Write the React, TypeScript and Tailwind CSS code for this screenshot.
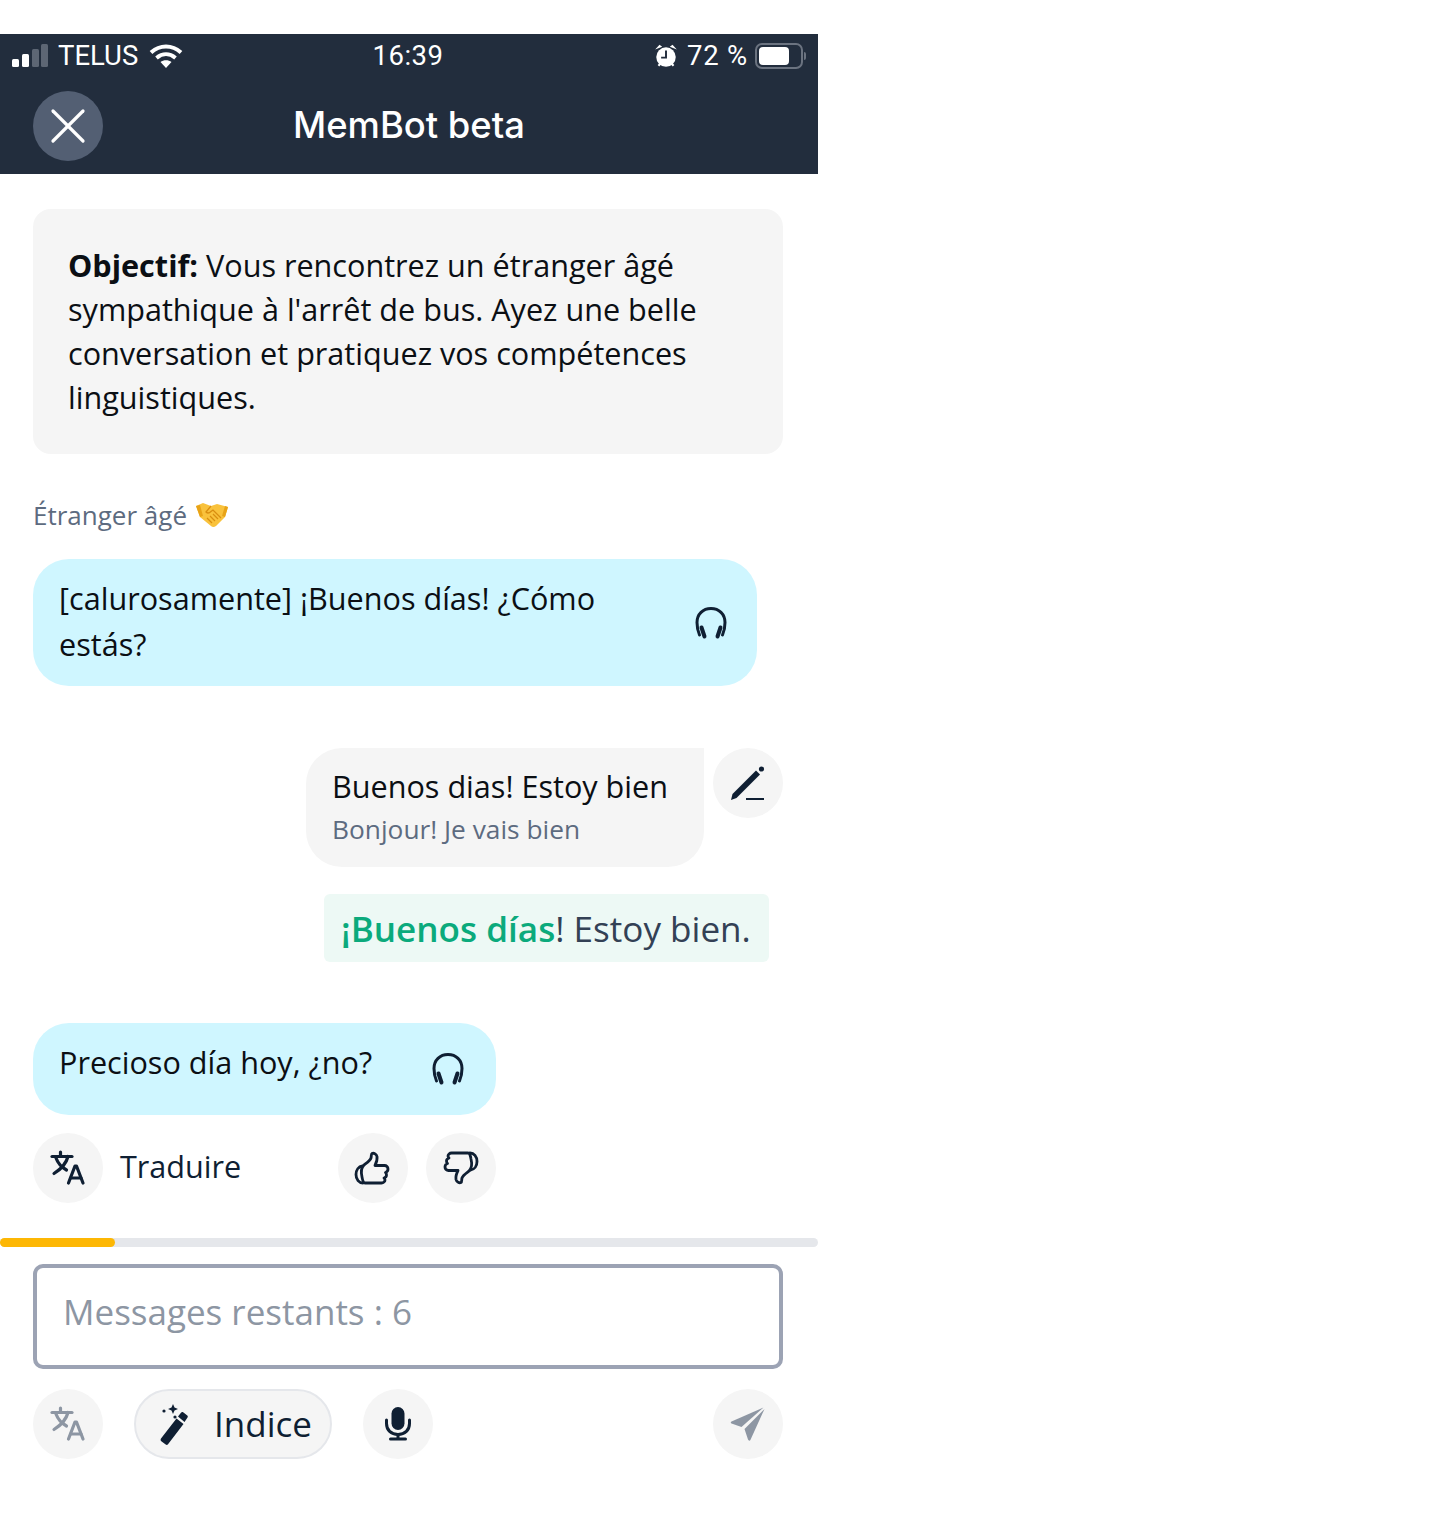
import { X } from "lucide-react";

const font = { fontFamily: '"Open Sans", sans-serif' };

function RoundButton({ children, className = "" }: { children: React.ReactNode; className?: string }) {
  return (
    <div className={`flex h-[70px] w-[70px] shrink-0 items-center justify-center rounded-full bg-[#f5f5f5] ${className}`}>
      {children}
    </div>
  );
}

function TranslateIcon({ color }: { color: string }) {
  return (
    <svg width="36" height="36" viewBox="0 0 36 36" fill="none" stroke={color} strokeWidth="3.200" strokeLinecap="round" strokeLinejoin="round">
      <path d="M2 6.500h20" />
      <path d="M10.500 2v4.500" />
      <path d="M18 6.500c-1.500 6-6 12-14 17" />
      <path d="M6 8c2 5.500 6 9.500 10.500 12" />
      <path d="M18.500 33l6.500-17h1.500l6.500 17" />
      <path d="M20.500 28h10.500" />
    </svg>
  );
}

function HeadphonesIcon() {
  return (
    <svg width="32" height="34" viewBox="0 0 32 34" fill="none" stroke="#0f1f33" strokeLinecap="round" strokeLinejoin="round">
      <path d="M4.500 29C2.500 24.500 2 21 2 16.500 2 8 8 2.500 16 2.500S30 8 30 16.500c0 4.500-.5 8-2.500 12.500" strokeWidth="3" />
      <path d="M6.500 21.500l3 9" strokeWidth="4" />
      <path d="M25.500 21.500l-3 9" strokeWidth="4" />
    </svg>
  );
}

function PencilIcon() {
  return (
    <svg width="36" height="36" viewBox="0 0 36 36" fill="#0f1f33">
      <path d="M1 35l1.500-6L26 5.500l4 4L6.500 33z" />
      <circle cx="31.500" cy="4" r="2.600" />
      <rect x="16" y="33" width="18" height="2" />
    </svg>
  );
}

function ThumbIcon({ flip = false }: { flip?: boolean }) {
  return (
    <svg width="36" height="36" viewBox="0 0 36 36" fill="none" stroke="#0f1f33" strokeWidth="2.800" strokeLinecap="round" strokeLinejoin="round" className={flip ? "rotate-180" : "-ml-[2px]"}>
      <path d="M9 33c-4 0-7-3.500-7-8.500 0-4.500 2.500-8 6.500-8.500" />
      <path d="M11 33h16.500c2 0 3.500-1.500 3.500-3 0-1-.5-1.500-1-2 1.500-.5 2.500-1.500 2.500-3 0-1-.5-2-1-2.500 1.500-.5 2.500-2 2.500-3.500 0-2-1.500-3.500-3.500-3.500H21c1.500-3 2.500-6 2-9-.5-2-3-4-5-3-1 .5-.5 3-1 4.500C16 11 11 14 10 15c-3 3-3 8-2 12 .5 3 1.500 6 3 6z" />
    </svg>
  );
}

function WandIcon() {
  return (
    <svg width="30" height="44" viewBox="0 0 30 44" fill="#0f1f33">
      <path d="M2 36.500L17.500 16.500l7 5.500L9 42.300c-.6.800-1.500.9-2.300.3l-4.400-3.400c-.8-.6-.9-1.900-.3-2.700z" />
      <path d="M19 14.500l3.200-4c.5-.6 1.300-.7 1.900-.2l4.200 3.300c.6.500.7 1.300.2 1.900L25.500 20z" />
      <path d="M14 2l1.500 3.500L19 7l-3.500 1.500L14 12l-1.500-3.500L9 7l3.500-1.500z" />
      <circle cx="5" cy="9" r="1.600" />
      <circle cx="16" cy="15" r="1.600" />
    </svg>
  );
}

function MicIcon() {
  return (
    <svg width="26" height="34" viewBox="0 0 26 34" fill="#0f1f33">
      <rect x="6.500" y="0" width="13" height="23" rx="6.500" />
      <path d="M1.500 13v3.500C1.500 23 6 27.500 13 27.500S24.500 23 24.500 16.500V13" fill="none" stroke="#0f1f33" strokeWidth="3" strokeLinecap="round" />
      <rect x="11.500" y="27" width="3" height="5" />
      <rect x="4" y="30.500" width="18" height="3" rx="1.500" />
    </svg>
  );
}

function SendIcon() {
  return (
    <svg width="36" height="36" viewBox="0 0 36 36" fill="#8d96a3">
      <path d="M33.500 1.500L1.500 15.500c-1 .5-1 1.500 0 2l10 3.500z" />
      <path d="M34.500 3L14.500 23l3.500 10.500c.5 1.500 2 1.500 2.500.2z" />
    </svg>
  );
}

function HandshakeEmoji() {
  return (
    <svg width="34" height="26" viewBox="0 0 34 26">
      <path d="M1 4l7-3 8 3 6-2 11 3-3 10-9 9c-2 1.500-4 1-5 0L5 15z" fill="#f9c23c" />
      <path d="M1 4l4 11 3-1L5 3z" fill="#e8a317" />
      <path d="M33 5l-3 10-3-1 3-10z" fill="#e8a317" />
      <path d="M16 4l-5 6c1.500 1.500 3.500 1 5-.5l2-1.500 8 8" fill="none" stroke="#d98e10" strokeWidth="1.300" />
      <path d="M12 16l5 5M15 14l5 5M18 12l5 5" stroke="#d98e10" strokeWidth="1.200" />
    </svg>
  );
}

export default function App() {
  return (
    <div className="h-[1528px] w-[1432px] overflow-hidden bg-white pt-[34px] text-[#0f1f33]" style={font}>
      <div className="w-[818px]">
        <header className="h-[140px] bg-[#222d3d] text-white">
          <div className="grid h-[44px] grid-cols-3 items-center pl-[12px] pr-[12px] text-[27.500px] font-['Roboto',sans-serif]">
            <div className="flex items-center gap-[10px]">
              <svg width="36" height="24" viewBox="0 0 36 24">
                <rect x="0" y="15" width="7" height="8" rx="1.500" fill="#fff" />
                <rect x="10" y="10" width="7" height="13" rx="1.500" fill="#fff" />
                <rect x="20" y="5" width="7" height="18" rx="1.500" fill="#5d6674" />
                <rect x="29" y="0" width="7" height="23" rx="1.500" fill="#5d6674" />
              </svg>
              <span>TELUS</span>
              <svg width="34" height="26" viewBox="0 0 34 26" fill="none" stroke="#fff" strokeWidth="4" className="ml-[1px]">
                <path d="M2 9.500c9-8 21-8 30 0" />
                <path d="M7.500 15c6-5 13-5 19 0" />
                <path d="M17 25l-5.500-6c3-2.500 8-2.500 11 0z" fill="#fff" stroke="none" />
              </svg>
            </div>
            <div className="-ml-[2px] text-center tracking-[0.500px]">16:39</div>
            <div className="flex items-center justify-end">
              <svg width="24" height="26" viewBox="0 0 22 24" className="mr-[9px]">
                <circle cx="11" cy="13" r="9" fill="#fff" />
                <path d="M1 6l4-4.500 2.500 2zM21 6l-4-4.500-2.500 2z" fill="#fff" />
                <path d="M11 7v6.500H6.500" fill="none" stroke="#222d3d" strokeWidth="1.800" />
                <path d="M4 21l2-2M18 21l-2-2" stroke="#fff" strokeWidth="2" />
              </svg>
              <span className="tracking-[0.800px]">72 %</span>
              <div className="ml-[7px] flex h-[26px] w-[48px] items-center rounded-[7px] border-2 border-[#6b7380] p-[2px]">
                <div className="h-full w-[30px] rounded-[4px] bg-white" />
              </div>
              <div className="ml-[1px] h-[8px] w-[2px] rounded-r bg-[#6b7380]" />
            </div>
          </div>
          <div className="grid h-[96px] grid-cols-[70px_1fr_70px] items-center px-[33px] pb-[1px]">
            <div className="flex h-[70px] w-[70px] items-center justify-center rounded-full bg-[#535f73]">
              <X size={60} strokeWidth={1.300} color="#fff" />
            </div>
            <div className="text-center text-[36.400px] font-medium font-['Inter',sans-serif]">MemBot beta</div>
            <div />
          </div>
        </header>

        <main className="pl-[33px] pr-[35px]">
          <div className="mt-[35px] rounded-[18px] bg-[#f5f5f5] px-[35px] pb-[35px] pt-[34px] text-[30.600px] leading-[44px] text-[#0b0f14]">
            <b className="font-bold">Objectif:</b> Vous rencontrez un étranger âgé sympathique à l'arrêt de bus. Ayez une belle conversation et pratiquez vos compétences linguistiques.
          </div>

          <div className="mt-[41px] flex h-[40px] items-center gap-[8px] text-[26px] text-[#5d6b80]">
            <span>Étranger âgé</span>
            <HandshakeEmoji />
          </div>

          <div className="mt-[24px] flex h-[127px] w-[724px] items-center rounded-[36px] bg-[#cff6ff] pl-[26px] pr-[30px]">
            <p className="-mt-[4px] w-[600px] text-[30.600px] leading-[46px] text-[#0b0f14]">[calurosamente] ¡Buenos días! ¿Cómo estás?</p>
            <div className="ml-auto"><HeadphonesIcon /></div>
          </div>

          <div className="mt-[62px] flex justify-end gap-[9px]">
            <div className="h-[119px] w-[398px] rounded-[36px] rounded-tr-none bg-[#f5f5f5] pl-[26px] pt-[16px]">
              <p className="text-[30.600px] leading-[44px] text-[#0b0f14]">Buenos dias! Estoy bien</p>
              <p className="text-[26.300px] leading-[42px] text-[#5d6b80]">Bonjour! Je vais bien</p>
            </div>
            <RoundButton><PencilIcon /></RoundButton>
          </div>

          <div className="mt-[27px] flex justify-end pr-[14px]">
            <div className="flex h-[68px] w-[445px] items-center rounded-[6px] bg-[#edf9f5] pl-[17px] text-[35.100px] text-[#334155]">
              <span className="font-semibold text-[#0baa7c]">¡Buenos días</span>! Estoy bien.
            </div>
          </div>

          <div className="mt-[61px] flex h-[92px] w-[463px] items-center justify-between rounded-[36px] bg-[#cff6ff] pl-[26px] pr-[32px]">
            <p className="-mt-[12px] text-[30.600px] text-[#0b0f14]">Precioso día hoy, ¿no?</p>
            <HeadphonesIcon />
          </div>

          <div className="mt-[18px] flex w-[463px] items-center">
            <RoundButton><TranslateIcon color="#0f1f33" /></RoundButton>
            <span className="-mt-[2px] ml-[17px] text-[30.600px]">Traduire</span>
            <RoundButton className="ml-auto"><ThumbIcon /></RoundButton>
            <RoundButton className="ml-[18px]"><ThumbIcon flip /></RoundButton>
          </div>
        </main>

        <div className="mt-[35px] h-[9px] rounded-full bg-[#e5e7eb]">
          <div className="h-full w-[115px] rounded-full bg-[#fdb704]" />
        </div>

        <div className="pl-[33px] pr-[35px]">
          <div className="mt-[17px] flex h-[105px] items-start rounded-[10px] border-4 border-[#9ca3b4] pl-[26px] pt-[18px] text-[35px] text-[#8d96a3]">
            Messages restants : 6
          </div>
        </div>

        <div className="mt-[20px] flex items-center pl-[33px] pr-[35px]">
          <RoundButton><TranslateIcon color="#8d96a3" /></RoundButton>
          <div className="ml-[31px] flex h-[70px] w-[198px] items-center rounded-full border-2 border-[#e5e7eb] bg-[#f5f5f5] pl-[23px] text-[35px]">
            <WandIcon />
            <span className="ml-[25px]">Indice</span>
          </div>
          <RoundButton className="ml-[31px]"><MicIcon /></RoundButton>
          <RoundButton className="ml-auto"><SendIcon /></RoundButton>
        </div>
      </div>
    </div>
  );
}
